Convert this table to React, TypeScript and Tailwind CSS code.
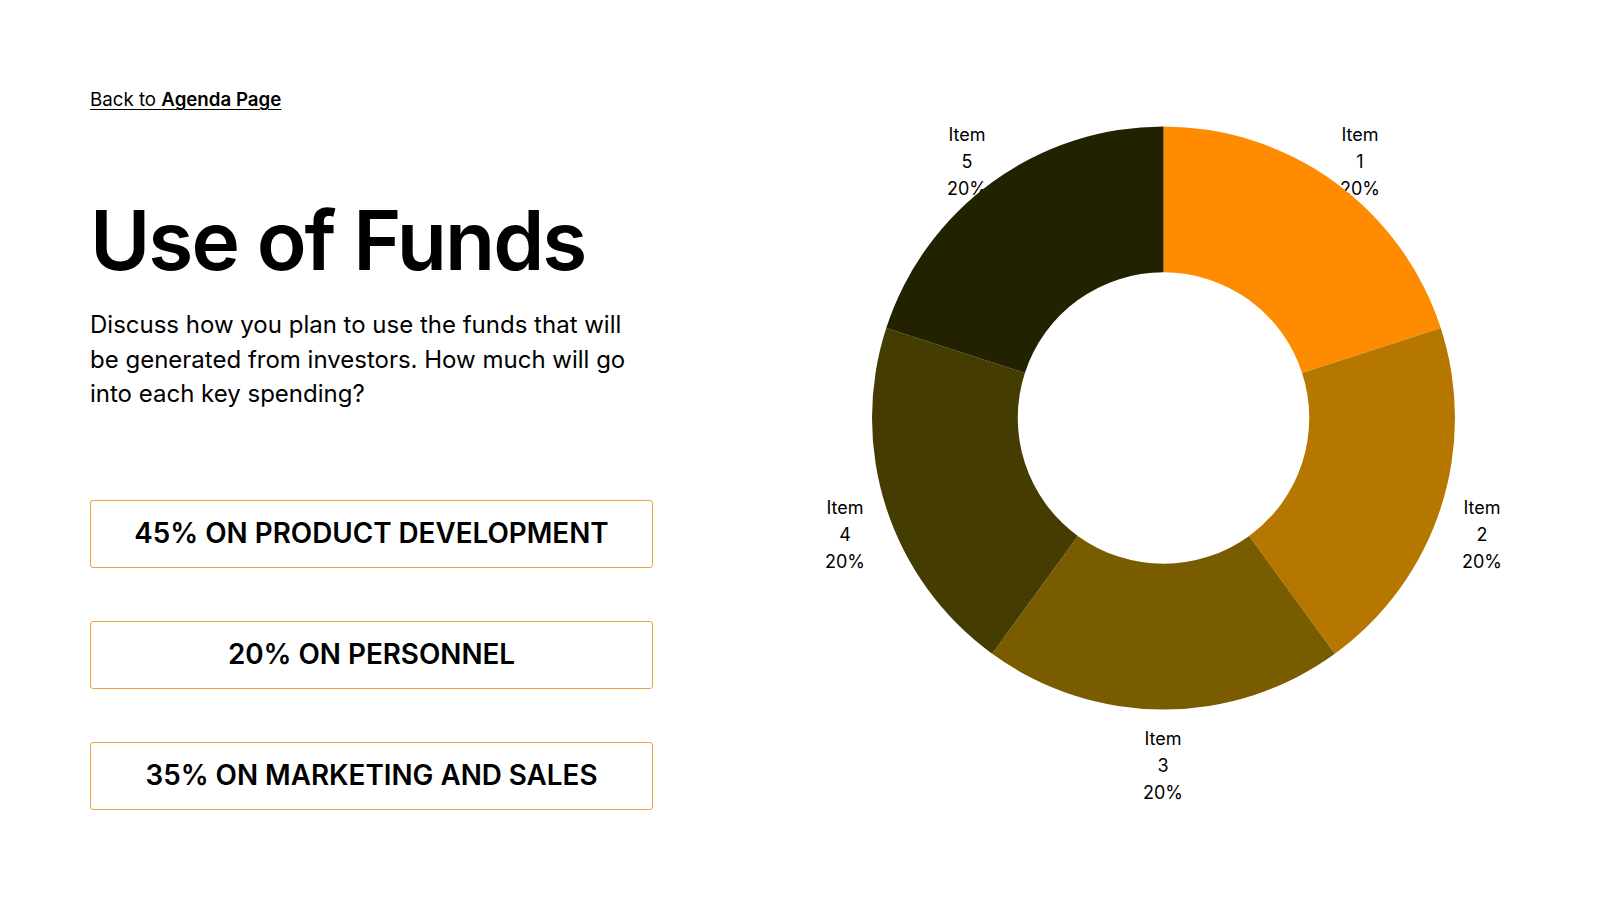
import React from "react";

const CX = 463.5;
const CY = 418;
const RO = 291.5;
const RI = 145.75;

const slices = [
  { color: "#FF8C00" },
  { color: "#B67700" },
  { color: "#7A5C00" },
  { color: "#443C00" },
  { color: "#222200" },
];

function pt(r: number, deg: number) {
  const a = ((deg - 90) * Math.PI) / 180;
  return [CX + r * Math.cos(a), CY + r * Math.sin(a)];
}

function segPath(a0: number, a1: number) {
  const [x0, y0] = pt(RO, a0);
  const [x1, y1] = pt(RO, a1);
  const [x2, y2] = pt(RI, a1);
  const [x3, y3] = pt(RI, a0);
  return `M ${x0} ${y0} A ${RO} ${RO} 0 0 1 ${x1} ${y1} L ${x2} ${y2} A ${RI} ${RI} 0 0 0 ${x3} ${y3} Z`;
}

function Label({ n, className }: { n: number; className: string }) {
  return (
    <div
      className={`absolute -translate-x-1/2 text-center text-[18px] leading-[27px] text-black ${className}`}
    >
      <div>Item</div>
      <div>{n}</div>
      <div>20%</div>
    </div>
  );
}

function Box({ children }: { children: React.ReactNode }) {
  return (
    <div className="flex h-[68px] w-[563px] items-center justify-center rounded-[3px] border-[1.5px] border-[#EFA443] text-[27.8px] font-semibold leading-none text-black">
      {children}
    </div>
  );
}

export default function App() {
  return (
    <div
      className="flex h-[900px] w-[1600px] overflow-hidden bg-white text-black"
      style={{ fontFamily: "Inter, 'Noto Sans', sans-serif" }}
    >
      <div className="flex w-[700px] flex-col pl-[90px] pt-[88px]">
        <a className="h-[24px] text-[18.7px] leading-[24px] underline decoration-1 underline-offset-[3px]">
          Back to <span className="font-semibold">Agenda Page</span>
        </a>
        <h1 className="mt-[88px] text-[82px] font-semibold leading-[82px] tracking-[-0.024em]">
          Use of Funds
        </h1>
        <p className="mt-[26px] text-[24px] leading-[34.5px]">
          Discuss how you plan to use the funds that will
          <br />
          be generated from investors. How much will go
          <br />
          into each key spending?
        </p>
        <div className="mt-[88px] flex flex-col gap-[53px]">
          <Box>45% ON PRODUCT DEVELOPMENT</Box>
          <Box>20% ON PERSONNEL</Box>
          <Box>35% ON MARKETING AND SALES</Box>
        </div>
      </div>
      <div className="relative h-[900px] w-[900px]">
        <Label n={1} className="left-[660px] top-[121px]" />
        <Label n={2} className="left-[782px] top-[494px]" />
        <Label n={3} className="left-[463px] top-[725px]" />
        <Label n={4} className="left-[145px] top-[494px]" />
        <Label n={5} className="left-[267px] top-[121px]" />
        <svg
          className="pointer-events-none absolute left-0 top-0"
          width="900"
          height="900"
          viewBox="0 0 900 900"
        >
          {slices.map((s, i) => (
            <path key={i} d={segPath(i * 72, (i + 1) * 72)} fill={s.color} />
          ))}
        </svg>
      </div>
    </div>
  );
}
